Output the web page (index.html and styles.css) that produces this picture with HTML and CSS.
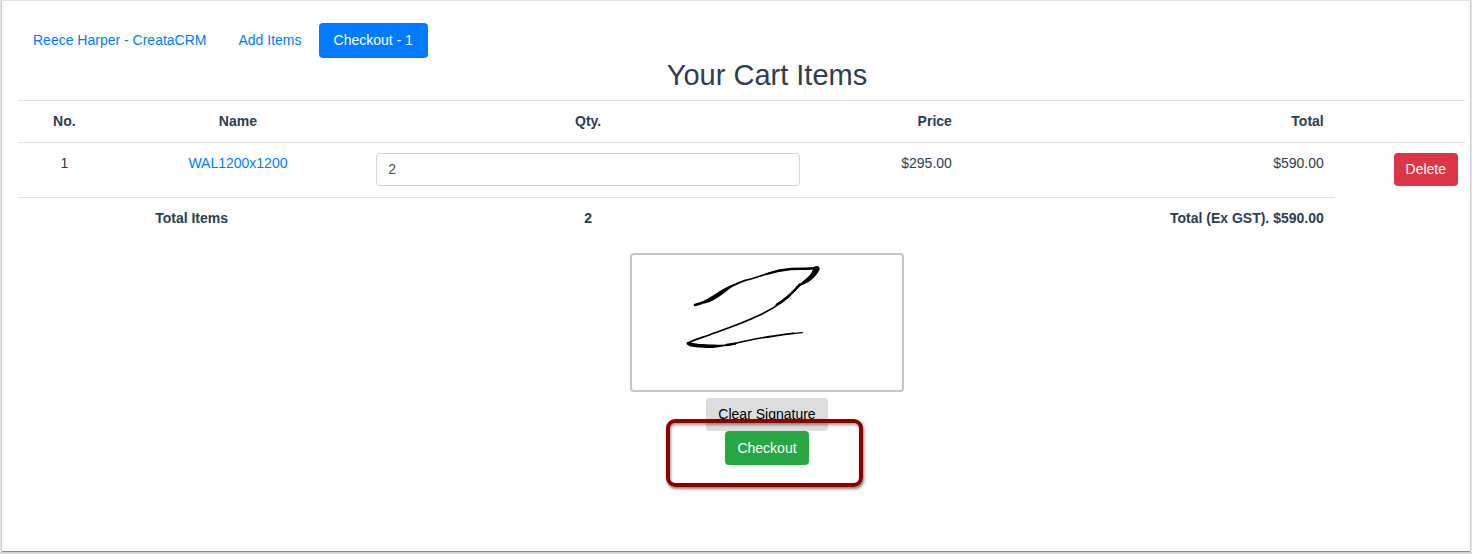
FILE: index.html
```html
<!DOCTYPE html>
<html lang="en">
<head>
    <meta charset="utf-8">
    <title>Checkout</title>
    <link rel="stylesheet" href="styles.css">
</head>
<body>
    <main class="page">
        <nav class="nav-pills">
            <a class="nav-link" href="#customer">Reece Harper - CreataCRM</a>
            <a class="nav-link" href="#items">Add Items</a>
            <a class="nav-link active" href="#checkout">Checkout - 1</a>
        </nav>

        <h1 class="title">Your Cart Items</h1>

        <table class="cart">
            <colgroup>
                <col class="col-no">
                <col class="col-name">
                <col class="col-qty">
                <col class="col-price">
                <col class="col-total">
                <col class="col-action">
            </colgroup>
            <thead>
                <tr>
                    <th>No.</th>
                    <th>Name</th>
                    <th>Qty.</th>
                    <th class="right">Price</th>
                    <th class="right">Total</th>
                    <th></th>
                </tr>
            </thead>
            <tbody>
                <tr class="item">
                    <td>1</td>
                    <td><a href="#WAL1200x1200">WAL1200x1200</a></td>
                    <td><input class="qty" type="text" value="2" aria-label="Quantity"></td>
                    <td class="right">$295.00</td>
                    <td class="right">$590.00</td>
                    <td class="action"><button class="btn btn-danger" type="button">Delete</button></td>
                </tr>
            </tbody>
            <tfoot>
                <tr>
                    <th colspan="2">Total Items</th>
                    <th>2</th>
                    <th class="right" colspan="2">Total (Ex GST). $590.00</th>
                </tr>
            </tfoot>
        </table>

        <section class="sign">
            <div class="signature">
                <svg viewBox="36 45 810 405" role="img" aria-label="Signature">
                    <g fill="none" stroke="#000" stroke-linecap="round" stroke-linejoin="round">
                        <path stroke-width="5" d="M225 195 C275 186 310 142 376 121 C410 115 460 89 515 87 C545 87 570 88 590 83 C594 98 555 115 523 153 C465 220 335 260 270 284 C240 295 215 301 204 310 C235 317 300 322 340 312 C400 295 480 285 520 280"/>
                        <path stroke-width="4" d="M515 281 L547 278"/>
                        <path stroke-width="8" d="M225 195 L243 190 M204 311 L222 315"/>
                        <path stroke-width="7" d="M440 102 Q475 90 513 87 L592 85 M470 194 Q505 174 540 133 M320 315 L345 311"/>
                    </g>
                    <path d="M236 188 C270 178 300 146 345 131 C315 158 280 190 240 192 Z"/>
                    <path d="M580 81 Q599 73 599 88 C590 110 568 130 538 138 C558 117 580 99 580 81 Z"/>
                    <path d="M199 309 Q207 301 215 309 C245 314 285 314 322 314 C290 328 245 325 208 319 Z"/>
                </svg>
            </div>
            <button class="btn btn-clear" type="button">Clear Signature</button>
            <div class="checkout">
                <button class="btn btn-success" type="button">Checkout</button>
                <span class="highlight"></span>
            </div>
        </section>
    </main>
</body>
</html>
```
FILE: styles.css
```css
* { box-sizing: border-box; }
body { margin: 0; padding: 1px 2px 3px; background: #e8e8e8; color: #2c3e50; font: 14px/21px "Liberation Sans", Arial, sans-serif; }
a { color: #007bff; text-decoration: none; }

.page { min-height: calc(100vh - 4px); padding: 22px 5px 20px 16px; background: #fff; box-shadow: 0 1px 0 #888, 0 1px 1px 1px #ccc; }

.nav-pills { display: flex; gap: 2px; }
.nav-link { padding: 7px 15px; border-radius: 4px; }
.nav-link.active { background: #007bff; color: #fff; }

.title { margin: 0 0 7px; padding-left: 51px; font-size: 29px; line-height: 35px; font-weight: 400; text-align: center; }

.cart { width: 100%; border-collapse: collapse; table-layout: fixed; text-align: center; }
.cart th, .cart td { padding: 10px 11px; border-top: 1px solid #dee2e6; vertical-align: top; }
.cart .right { text-align: right; }
.cart .action { padding: 10px 7px; text-align: right; }
.item { height: 55px; }
.col-no { width: 6.4%; }
.col-name { width: 17.6%; }
.col-qty { width: 30.8%; }
.col-price { width: 10.5%; }
.col-total { width: 25.7%; }
.col-action { width: 9%; }

.qty { display: block; width: 100%; height: 33px; padding: 4px 11px 6px; border: 1px solid #ced4da; border-radius: 4px; color: #495057; font: inherit; }

.btn { display: block; height: 33px; padding: 0 12px; border: 0; border-radius: 4px; font: inherit; color: #fff; cursor: pointer; }
.btn-danger { display: inline-block; vertical-align: top; background: #dc3545; }
.btn-clear { background: #ddd; color: #000; }
.btn-success { height: 34px; background: #28a745; }

.sign { display: flex; flex-direction: column; align-items: center; padding: 14px 0 0 51px; }
.signature { width: 274px; margin-bottom: 6px; border: 2px solid #c5c5c3; border-radius: 4px; }
.signature svg { display: block; width: 100%; }
.checkout { position: relative; }
.highlight { position: absolute; top: -12px; right: -54px; bottom: -22px; left: -59px; border: 4px solid #8b0000; border-radius: 9px; box-shadow: 1px 2px 3px rgba(0, 0, 0, .5), inset 1px 2px 3px rgba(0, 0, 0, .4); pointer-events: none; }
```
